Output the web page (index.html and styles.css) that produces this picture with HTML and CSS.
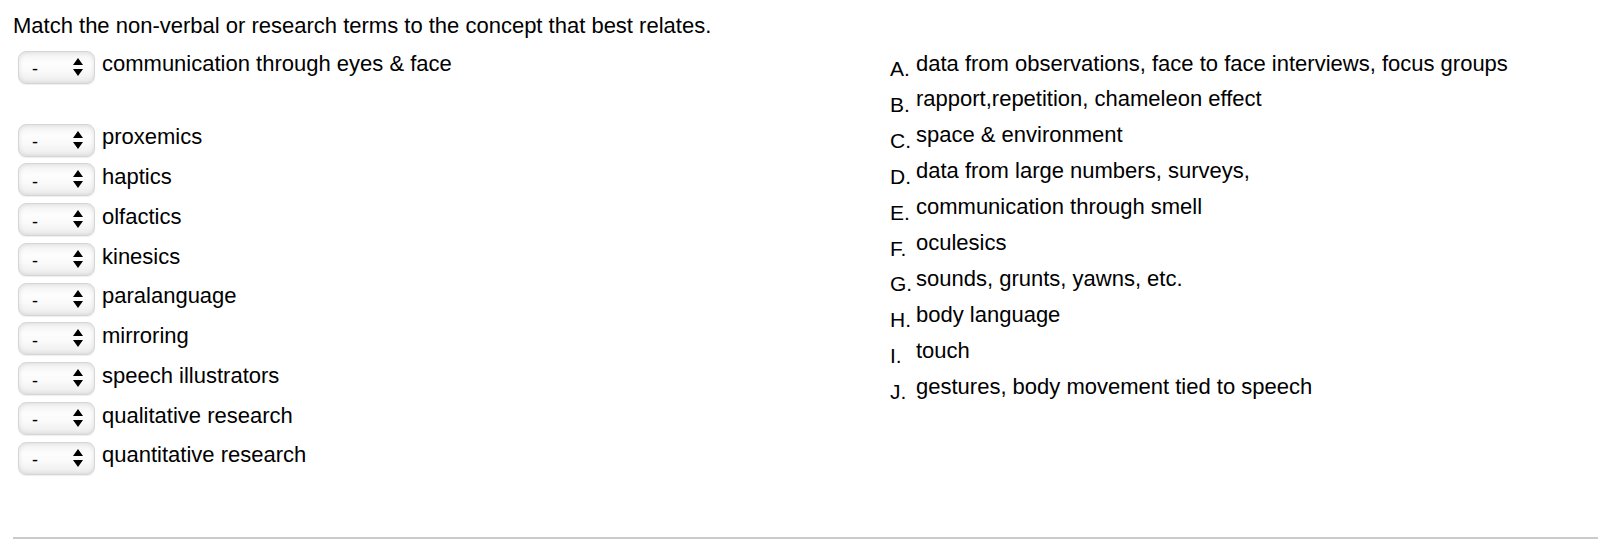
FILE: index.html
```html
<!DOCTYPE html>
<html lang="en">
<head>
<meta charset="utf-8">
<title>Matching question</title>
<link rel="stylesheet" href="styles.css">
</head>
<body>
<div class="page">
  <p class="title">Match the non-verbal or research terms to the concept that best relates.</p>
  <div class="columns">
    <div class="terms">
      <div class="term first"><span class="select"><select><option>-</option></select><svg class="arrows" width="10" height="18" viewBox="0 0 10 18"><path d="M5 0 L10 7 L0 7 Z M0 11 L10 11 L5 18 Z" fill="#000"/></svg></span><span class="label">communication through eyes &amp; face</span></div>
      <div class="term"><span class="select"><select><option>-</option></select><svg class="arrows" width="10" height="18" viewBox="0 0 10 18"><path d="M5 0 L10 7 L0 7 Z M0 11 L10 11 L5 18 Z" fill="#000"/></svg></span><span class="label">proxemics</span></div>
      <div class="term"><span class="select"><select><option>-</option></select><svg class="arrows" width="10" height="18" viewBox="0 0 10 18"><path d="M5 0 L10 7 L0 7 Z M0 11 L10 11 L5 18 Z" fill="#000"/></svg></span><span class="label">haptics</span></div>
      <div class="term"><span class="select"><select><option>-</option></select><svg class="arrows" width="10" height="18" viewBox="0 0 10 18"><path d="M5 0 L10 7 L0 7 Z M0 11 L10 11 L5 18 Z" fill="#000"/></svg></span><span class="label">olfactics</span></div>
      <div class="term"><span class="select"><select><option>-</option></select><svg class="arrows" width="10" height="18" viewBox="0 0 10 18"><path d="M5 0 L10 7 L0 7 Z M0 11 L10 11 L5 18 Z" fill="#000"/></svg></span><span class="label">kinesics</span></div>
      <div class="term"><span class="select"><select><option>-</option></select><svg class="arrows" width="10" height="18" viewBox="0 0 10 18"><path d="M5 0 L10 7 L0 7 Z M0 11 L10 11 L5 18 Z" fill="#000"/></svg></span><span class="label">paralanguage</span></div>
      <div class="term"><span class="select"><select><option>-</option></select><svg class="arrows" width="10" height="18" viewBox="0 0 10 18"><path d="M5 0 L10 7 L0 7 Z M0 11 L10 11 L5 18 Z" fill="#000"/></svg></span><span class="label">mirroring</span></div>
      <div class="term"><span class="select"><select><option>-</option></select><svg class="arrows" width="10" height="18" viewBox="0 0 10 18"><path d="M5 0 L10 7 L0 7 Z M0 11 L10 11 L5 18 Z" fill="#000"/></svg></span><span class="label">speech illustrators</span></div>
      <div class="term"><span class="select"><select><option>-</option></select><svg class="arrows" width="10" height="18" viewBox="0 0 10 18"><path d="M5 0 L10 7 L0 7 Z M0 11 L10 11 L5 18 Z" fill="#000"/></svg></span><span class="label">qualitative research</span></div>
      <div class="term"><span class="select"><select><option>-</option></select><svg class="arrows" width="10" height="18" viewBox="0 0 10 18"><path d="M5 0 L10 7 L0 7 Z M0 11 L10 11 L5 18 Z" fill="#000"/></svg></span><span class="label">quantitative research</span></div>
    </div>
    <div class="answers">
      <div class="answer"><span class="letter">A.</span><span class="text">data from observations, face to face interviews, focus groups</span></div>
      <div class="answer"><span class="letter">B.</span><span class="text">rapport,repetition, chameleon effect</span></div>
      <div class="answer"><span class="letter">C.</span><span class="text">space &amp; environment</span></div>
      <div class="answer"><span class="letter">D.</span><span class="text">data from large numbers, surveys,</span></div>
      <div class="answer"><span class="letter">E.</span><span class="text">communication through smell</span></div>
      <div class="answer"><span class="letter">F.</span><span class="text">oculesics</span></div>
      <div class="answer"><span class="letter">G.</span><span class="text">sounds, grunts, yawns, etc.</span></div>
      <div class="answer"><span class="letter">H.</span><span class="text">body language</span></div>
      <div class="answer"><span class="letter">I.</span><span class="text">touch</span></div>
      <div class="answer"><span class="letter">J.</span><span class="text">gestures, body movement tied to speech</span></div>
    </div>
  </div>
  <div class="rule"></div>
</div>
</body>
</html>
```
FILE: styles.css
```css
html, body {
  margin: 0;
  padding: 0;
  background: #fff;
}

body {
  font-family: "Liberation Sans", Arial, Helvetica, sans-serif;
  font-size: 22px;
  line-height: 25px;
  color: #000;
}

.page {
  padding-left: 13px;
  padding-top: 12.6px;
}

.title {
  margin: 0;
  height: 25px;
  white-space: nowrap;
}

.columns {
  display: flex;
  margin-top: 5.8px;
}

.terms {
  width: 877px;
  flex: none;
  display: flex;
  flex-direction: column;
}

.term {
  display: flex;
  align-items: flex-start;
  height: 39.75px;
}

.term.first {
  margin-bottom: 33.2px;
}

.select {
  position: relative;
  display: inline-block;
  width: 77px;
  height: 33px;
  margin-top: 7.3px;
  margin-left: 5px;
  margin-right: 7px;
  flex: none;
}

.select select {
  -webkit-appearance: none;
  appearance: none;
  display: block;
  width: 77px;
  height: 33px;
  margin: 0;
  padding: 4px 0 0 13px;
  border: 1px solid #d6d6d6;
  border-radius: 8px;
  background: linear-gradient(#f1f1f1 0%, #fdfdfd 35%, #fafafa 60%, #ececec 100%);
  box-shadow: inset 0 0 5px rgba(0, 0, 0, 0.11), 0 1px 1px rgba(0, 0, 0, 0.07);
  font-family: "Liberation Sans", Arial, sans-serif;
  font-size: 18px;
  color: #000;
  outline: none;
}

.arrows {
  position: absolute;
  left: 55px;
  top: 7px;
  pointer-events: none;
}

.label {
  white-space: nowrap;
  padding-top: 8px;
}

.answers {
  display: flex;
  flex-direction: column;
  padding-top: 1.75px;
}

.answer {
  display: flex;
  align-items: flex-start;
  height: 35.9px;
}

.letter {
  width: 26px;
  flex: none;
  padding-top: 11px;
  font-size: 21px;
}

.text {
  white-space: nowrap;
  padding-top: 5.45px;
}

.rule {
  margin-top: 62.6px;
  height: 2px;
  background: #cbcbcb;
}
```
